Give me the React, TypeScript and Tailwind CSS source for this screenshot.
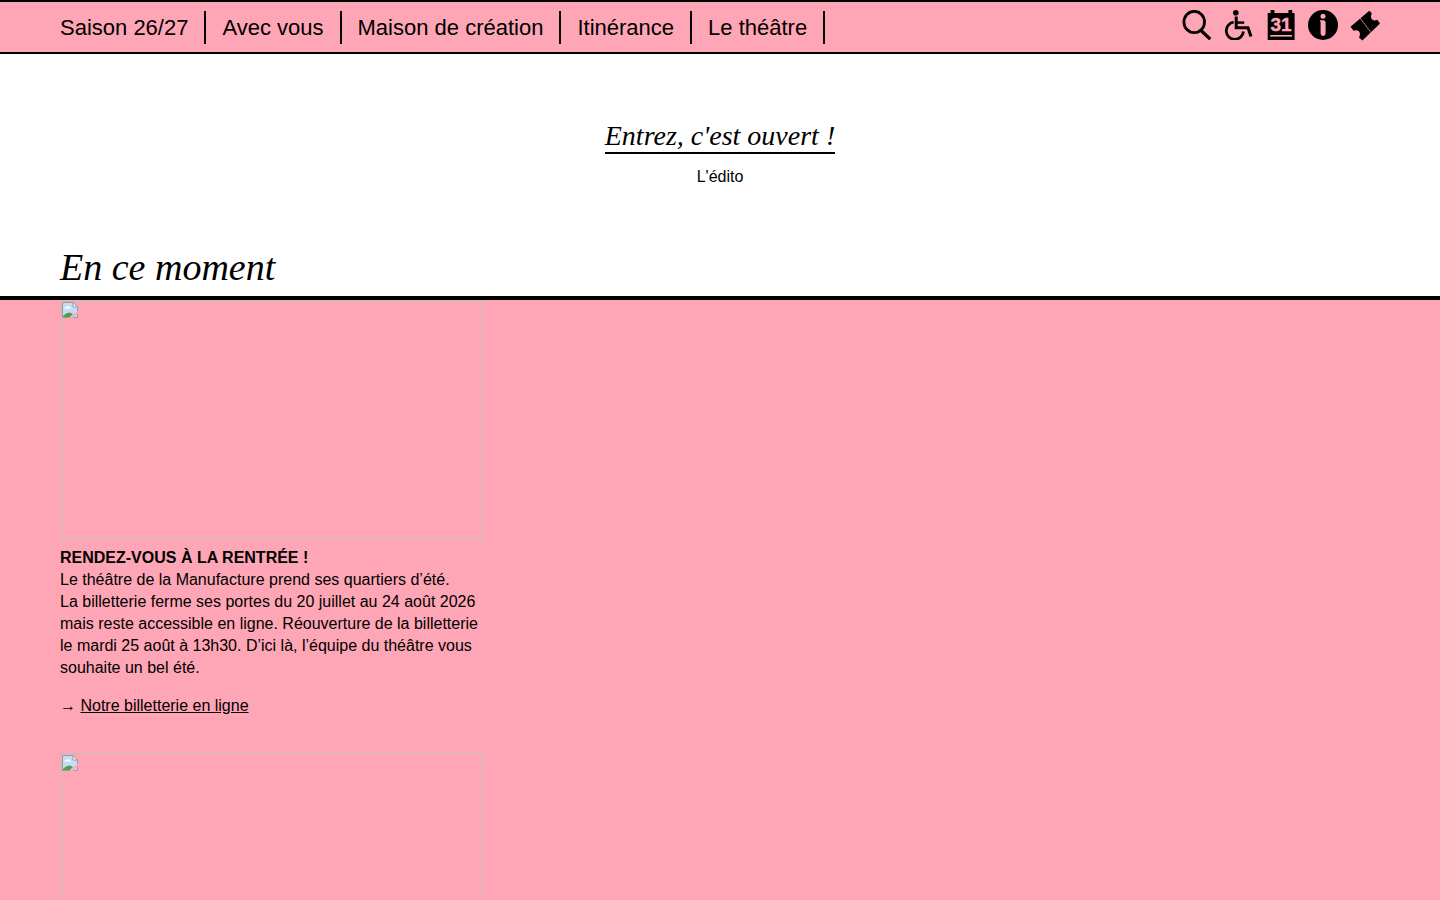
import React from 'react';

const menu = ['Saison 26/27', 'Avec vous', 'Maison de création', 'Itinérance', 'Le théâtre'];

function SearchIcon() {
    return (
        <svg viewBox="0 0 30 30" className="size-[30px]" fill="none" stroke="currentColor" aria-hidden="true">
            <ellipse cx="12.2" cy="12" rx="10.3" ry="10.7" strokeWidth="2.8" />
            <path d="M19 20.5 28.3 29.2" strokeWidth="3.2" />
        </svg>
    );
}

function AccessIcon() {
    return (
        <svg viewBox="0 0 30 30" className="size-[30px]" fill="none" stroke="currentColor" aria-hidden="true">
            <circle cx="11.8" cy="2.8" r="2.8" fill="currentColor" stroke="none" />
            <path d="M12.2 6.5V17.8H24L27 26.6" strokeWidth="3" />
            <path d="M12 12.6H20.2" strokeWidth="2.4" />
            <path d="M9.6 12.2A8.6 8.6 0 1 0 19.4 21.5" strokeWidth="2.8" />
        </svg>
    );
}

function CalendarIcon() {
    return (
        <svg viewBox="0 0 30 30" className="size-[30px] overflow-visible" fill="currentColor" aria-hidden="true">
            <path d="M1.7 3H4.6V0H8.4V3H22.4V0H26.2V3H28.6V30H1.7Z" />
            <path d="M4.2 25H26V26.6H4.2Z" className="fill-[#ffa6b6]" />
            <text x="15" y="21.4" textAnchor="middle" className="fill-[#ffa6b6] stroke-[#ffa6b6] font-['Liberation_Sans',sans-serif] text-[19px] font-bold" strokeWidth="0.4">
                31
            </text>
        </svg>
    );
}

function InfoIcon() {
    return (
        <svg viewBox="0 0 30 30" className="size-[30px]" fill="currentColor" aria-hidden="true">
            <circle cx="15" cy="15" r="15" />
            <g className="fill-[#ffa6b6]">
                <circle cx="15" cy="6.3" r="2.5" />
                <path d="M12 10.2H15.2Q17.6 10.2 17.6 12.4V23.6Q17.6 26 15.1 26T12.6 23.6V11.6H12Z" />
            </g>
        </svg>
    );
}

function TicketIcon() {
    return (
        <svg viewBox="0 0 30 30" className="size-[30px] overflow-visible" aria-hidden="true">
            <path
                d="M.5 16.8 19.3 .8 21.8 3.2C20.6 6.2 20.8 8.2 22.2 9.5 23.6 10.8 25.4 10.6 27.2 9.8L30 13.4 12.4 30.6 9 27.4C10.4 24.8 10.3 22.6 8.8 21.2 7.3 20 5.5 20.1 3.6 20.8Z"
                fill="currentColor"
            />
            <path d="M9.6 7.4 21 22.6" className="stroke-[#ffa6b6]" strokeWidth="1" strokeDasharray="1.6 0.6" />
        </svg>
    );
}

const tools = [
    { label: 'Recherche', icon: <SearchIcon /> },
    { label: 'Accessibilité', icon: <AccessIcon /> },
    { label: 'Calendrier', icon: <CalendarIcon /> },
    { label: 'Infos pratiques', icon: <InfoIcon /> },
    { label: 'Billetterie', icon: <TicketIcon /> },
];

// Empty frame with the small torn page in its corner
function MissingPicture() {
    return (
        <div className="aspect-[424/240] w-full border border-[#c0c0c0] p-px">
            <svg viewBox="0 0 16 16" className="size-4" aria-hidden="true">
                <path d="M.5 .5H11L15.5 5V9L8.5 15.5H.5Z" fill="#c5dcf8" />
                <path d="M2 6.5Q2.5 4.5 4.5 5 5.5 3 7 5 8.8 5 8.8 6.5Z" fill="#fff" />
                <path d="M1 15V14Q6 8 11 12L8 15Z" fill="#4ba43c" />
                <path d="M11.5 15.5H15.5V11.5Z" fill="#c5dcf8" />
                <path d="M15.5 9V5L11 .5H.5V15.5H8M11.5 15.5H15.5V12" fill="none" stroke="#9a9a9a" />
                <path d="M11 .5V5H15.5Z" fill="#fff" stroke="#9a9a9a" />
            </svg>
        </div>
    );
}

export default function App() {
    return (
        <div className="min-h-screen bg-white font-['Liberation_Sans',Arial,sans-serif] text-base/[22px] text-black">
            <header className="flex items-start justify-between border-y-2 border-black bg-[#ffa6b6] px-[60px] pt-2 pb-3">
                <nav className="flex pt-px">
                    {menu.map((item) => (
                        <a key={item} href="#" className="mr-4 -mb-1 border-r-2 border-black pr-4 text-[22px]/[33px]">
                            {item}
                        </a>
                    ))}
                </nav>
                <div className="flex gap-3">
                    {tools.map((tool) => (
                        <a key={tool.label} href="#" aria-label={tool.label}>
                            {tool.icon}
                        </a>
                    ))}
                </div>
            </header>

            <section className="flex flex-col items-center pt-[66px]">
                <h2 className="border-b-2 border-black font-['Liberation_Serif',serif] text-[28px]/[32px] italic">
                    <a href="#">Entrez, c'est ouvert !</a>
                </h2>
                <p className="mt-3">L'édito</p>
            </section>

            <h1 className="mt-[58px] border-b-4 border-black px-[60px] pb-2 font-['Liberation_Serif',serif] text-[38px]/[42px] italic">
                En ce moment
            </h1>

            <main className="grid grid-cols-3 gap-6 bg-[#ffa6b6] px-[60px]">
                <div>
                    <article className="pb-9">
                        <MissingPicture />
                        <h3 className="mt-[7px] font-bold">RENDEZ-VOUS À LA RENTRÉE !</h3>
                        <p>
                            Le théâtre de la Manufacture prend ses quartiers d’été.
                            <br />
                            La billetterie ferme ses portes du 20 juillet au 24 août 2026 mais reste accessible en ligne. Réouverture de la
                            billetterie le mardi 25 août à 13h30. D’ici là, l’équipe du théâtre vous souhaite un bel été.
                        </p>
                        <p className="mt-4">
                            → <a href="#" className="underline">Notre billetterie en ligne</a>
                        </p>
                    </article>
                    <article>
                        <MissingPicture />
                    </article>
                </div>
            </main>
        </div>
    );
}
